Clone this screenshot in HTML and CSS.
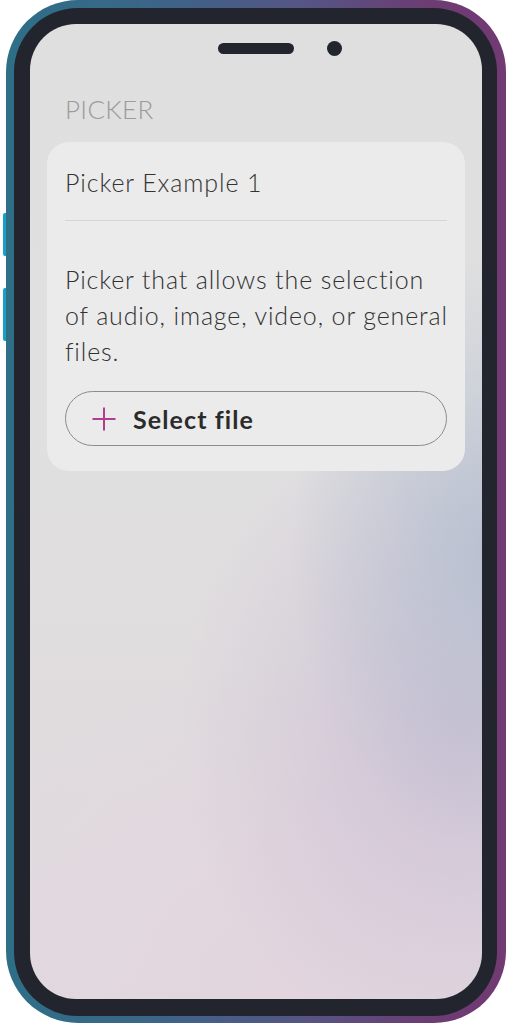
FILE: index.html
```html
<!DOCTYPE html>
<html lang="en">
<head>
<meta charset="utf-8">
<title>Picker</title>
<link rel="stylesheet" href="styles.css">
</head>
<body>
<div class="device">
  <div class="side-keys">
    <span class="key key-1"></span>
    <span class="key key-2"></span>
  </div>
  <div class="phone">
    <div class="bezel">
      <div class="screen">
        <div class="notch">
          <span class="speaker"></span>
          <span class="camera"></span>
        </div>
        <div class="section-label">PICKER</div>
        <div class="card">
          <div class="card-title">Picker Example 1</div>
          <div class="divider"></div>
          <p class="card-text">Picker that allows the selection of audio, image, video, or general files.</p>
          <button class="select-btn" type="button">
            <svg class="plus" width="26" height="26" viewBox="0 0 26 26" aria-hidden="true">
              <path d="M13 1.5V24.5M1.5 13H24.5" stroke="#b23c8e" stroke-width="2" fill="none"/>
            </svg>
            <span>Select file</span>
          </button>
        </div>
      </div>
    </div>
  </div>
</div>
</body>
</html>
```
FILE: styles.css
```css
html, body {
  margin: 0;
  padding: 0;
  background: #ffffff;
}

body {
  width: 512px;
  height: 1024px;
  overflow: hidden;
  font-family: Lato, "Noto Sans", sans-serif;
}

.device {
  display: flex;
  align-items: flex-start;
}

.side-keys {
  width: 3px;
  margin-left: 3px;
  padding-top: 213px;
  display: flex;
  flex-direction: column;
}

.key {
  display: block;
  width: 3px;
  background: #1aa0c6;
  border-radius: 2px 0 0 2px;
}

.key-1 { height: 43px; }
.key-2 { height: 53px; margin-top: 32px; }

.phone {
  width: 500px;
  height: 1023px;
  box-sizing: border-box;
  padding: 8px 9px 7px 8px;
  border-radius: 72px;
  background: linear-gradient(90deg, #2e6f86 0%, #3b6588 30%, #565485 60%, #6c3c72 85%, #713a72 100%);
}

.bezel {
  height: 100%;
  box-sizing: border-box;
  padding: 16px 15px 17px 16px;
  border-radius: 64px;
  background: #22252d;
}

.screen {
  height: 100%;
  border-radius: 46px;
  overflow: hidden;
  background:
    radial-gradient(ellipse 200px 300px at 102% 54%, rgba(176, 188, 206, 0.8), rgba(176, 188, 206, 0) 100%),
    radial-gradient(ellipse 280px 340px at 95% 72%, rgba(200, 186, 210, 0.75), rgba(200, 186, 210, 0) 100%),
    radial-gradient(ellipse 360px 320px at 55% 98%, rgba(226, 212, 222, 0.85), rgba(226, 212, 222, 0) 100%),
    linear-gradient(180deg, #dfdfdf 0%, #e0e0e0 40%, #e0dcde 70%, #e1dadf 100%);
}

.notch {
  display: flex;
  align-items: center;
  height: 15px;
  margin-top: 17px;
  padding-left: 188px;
}

.speaker {
  width: 76px;
  height: 11px;
  border-radius: 6px;
  background: #22252d;
}

.camera {
  width: 15px;
  height: 15px;
  margin-left: 33px;
  border-radius: 50%;
  background: #22252d;
}

.section-label {
  margin: 37px 0 0 35px;
  font-size: 26px;
  font-weight: 300;
  line-height: 32px;
  color: #9b9b9b;
  letter-spacing: 0.3px;
}

.card {
  margin: 17px 17px 0 17px;
  padding: 22px 18px 25px 18px;
  border-radius: 22px;
  background: #ebebeb;
}

.card-title {
  font-size: 25px;
  font-weight: 300;
  line-height: 36px;
  letter-spacing: 0.9px;
  color: #333333;
}

.divider {
  height: 1px;
  margin-top: 20px;
  background: #d5d5d5;
}

.card-text {
  margin: 40px -8px 22px 0;
  font-size: 25px;
  font-weight: 300;
  line-height: 36px;
  letter-spacing: 0.85px;
  color: #323232;
}

.select-btn {
  display: flex;
  align-items: center;
  width: 100%;
  height: 55px;
  box-sizing: border-box;
  padding: 0 0 0 25px;
  border: 1px solid #8c8c8c;
  border-radius: 28px;
  background: #ebebeb;
  font-family: Lato, "Noto Sans", sans-serif;
  font-size: 25px;
  font-weight: 700;
  letter-spacing: 1.1px;
  color: #2b2b2b;
  cursor: pointer;
}

.plus {
  flex: none;
  margin-right: 16px;
}
```
